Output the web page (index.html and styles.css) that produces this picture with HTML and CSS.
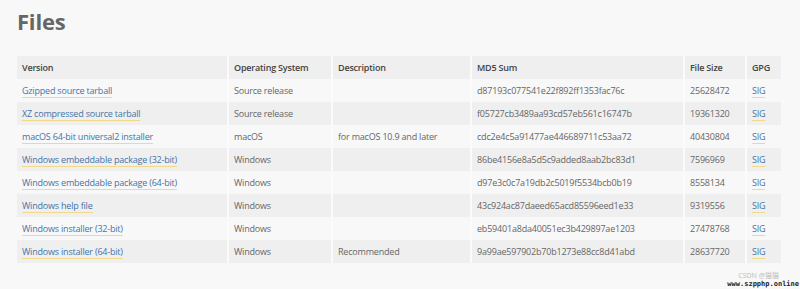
FILE: index.html
```html
<!DOCTYPE html>
<html lang="en">
<head>
  <meta charset="UTF-8">
  <title>Files</title>
  <link rel="stylesheet" href="styles.css">
</head>
<body>
  <section class="files">
    <h1>Files</h1>
    <table class="files-table">
      <colgroup>
        <col class="col-version">
        <col class="col-os">
        <col class="col-desc">
        <col class="col-md5">
        <col class="col-size">
        <col class="col-gpg">
      </colgroup>
      <thead>
        <tr>
          <th>Version</th>
          <th>Operating System</th>
          <th>Description</th>
          <th>MD5 Sum</th>
          <th>File Size</th>
          <th>GPG</th>
        </tr>
      </thead>
      <tbody>
        <tr>
          <td><a href="#">Gzipped source tarball</a></td>
          <td>Source release</td>
          <td></td>
          <td>d87193c077541e22f892ff1353fac76c</td>
          <td>25628472</td>
          <td><a href="#">SIG</a></td>
        </tr>
        <tr>
          <td><a href="#">XZ compressed source tarball</a></td>
          <td>Source release</td>
          <td></td>
          <td>f05727cb3489aa93cd57eb561c16747b</td>
          <td>19361320</td>
          <td><a href="#">SIG</a></td>
        </tr>
        <tr>
          <td><a href="#">macOS 64-bit universal2 installer</a></td>
          <td>macOS</td>
          <td>for macOS 10.9 and later</td>
          <td>cdc2e4c5a91477ae446689711c53aa72</td>
          <td>40430804</td>
          <td><a href="#">SIG</a></td>
        </tr>
        <tr>
          <td><a href="#">Windows embeddable package (32-bit)</a></td>
          <td>Windows</td>
          <td></td>
          <td>86be4156e8a5d5c9added8aab2bc83d1</td>
          <td>7596969</td>
          <td><a href="#">SIG</a></td>
        </tr>
        <tr>
          <td><a href="#">Windows embeddable package (64-bit)</a></td>
          <td>Windows</td>
          <td></td>
          <td>d97e3c0c7a19db2c5019f5534bcb0b19</td>
          <td>8558134</td>
          <td><a href="#">SIG</a></td>
        </tr>
        <tr>
          <td><a href="#">Windows help file</a></td>
          <td>Windows</td>
          <td></td>
          <td>43c924ac87daeed65acd85596eed1e33</td>
          <td>9319556</td>
          <td><a href="#">SIG</a></td>
        </tr>
        <tr>
          <td><a href="#">Windows installer (32-bit)</a></td>
          <td>Windows</td>
          <td></td>
          <td>eb59401a8da40051ec3b429897ae1203</td>
          <td>27478768</td>
          <td><a href="#">SIG</a></td>
        </tr>
        <tr>
          <td><a href="#">Windows installer (64-bit)</a></td>
          <td>Windows</td>
          <td>Recommended</td>
          <td>9a99ae597902b70b1273e88cc8d41abd</td>
          <td>28637720</td>
          <td><a href="#">SIG</a></td>
        </tr>
      </tbody>
    </table>
  </section>

  <div class="watermark">
    <span class="wm-csdn">CSDN @猫猫</span>
    <span class="wm-site">www.szpphp.online</span>
  </div>
</body>
</html>
```

FILE: styles.css
```css
body {
  margin: 0;
  background-color: #f8f8f8;
  font-family: "Open Sans", "Noto Sans CJK SC", sans-serif;
  color: #666;
  height: 289px;
  overflow: hidden;
  position: relative;
}
.files {
  padding: 0 19px 0 17px;
}
h1 {
  margin: 0;
  padding-top: 6px;
  height: 50px;
  font-size: 22px;
  line-height: 30px;
  font-weight: 700;
  color: #666;
  letter-spacing: -0.2px;
}
.files-table {
  width: 764px;
  table-layout: fixed;
  border-collapse: collapse;
  font-size: 9px;
  letter-spacing: -0.2px;
}
.col-version { width: 211px; }
.col-os { width: 104px; }
.col-desc { width: 139px; }
.col-md5 { width: 213px; }
.col-size { width: 62px; }
.col-gpg { width: 35px; }

th, td {
  height: 23px;
  padding: 0 5px;
  text-align: left;
  white-space: nowrap;
  border-left: 2px solid #fbfbfb;
}
th:first-child, td:first-child {
  border-left: none;
}
th {
  font-weight: 600;
  color: #444;
  background-color: #efefef;
}
td {
  color: #666;
}
tbody tr:nth-child(even) td {
  background-color: #efefef;
}
a {
  color: #4474a8;
  text-decoration: none;
  border-bottom: 1px solid #f2d98a;
}
.watermark {
  position: absolute;
  right: 1px;
  bottom: 1px;
  display: flex;
  flex-direction: column;
  align-items: flex-end;
  line-height: 8px;
}
.wm-csdn {
  margin-right: 20px;
  font-size: 7px;
  color: #bbb;
}
.wm-site {
  font-family: "DejaVu Sans Mono", monospace;
  font-size: 7px;
  font-weight: 700;
  color: #222;
}
```
